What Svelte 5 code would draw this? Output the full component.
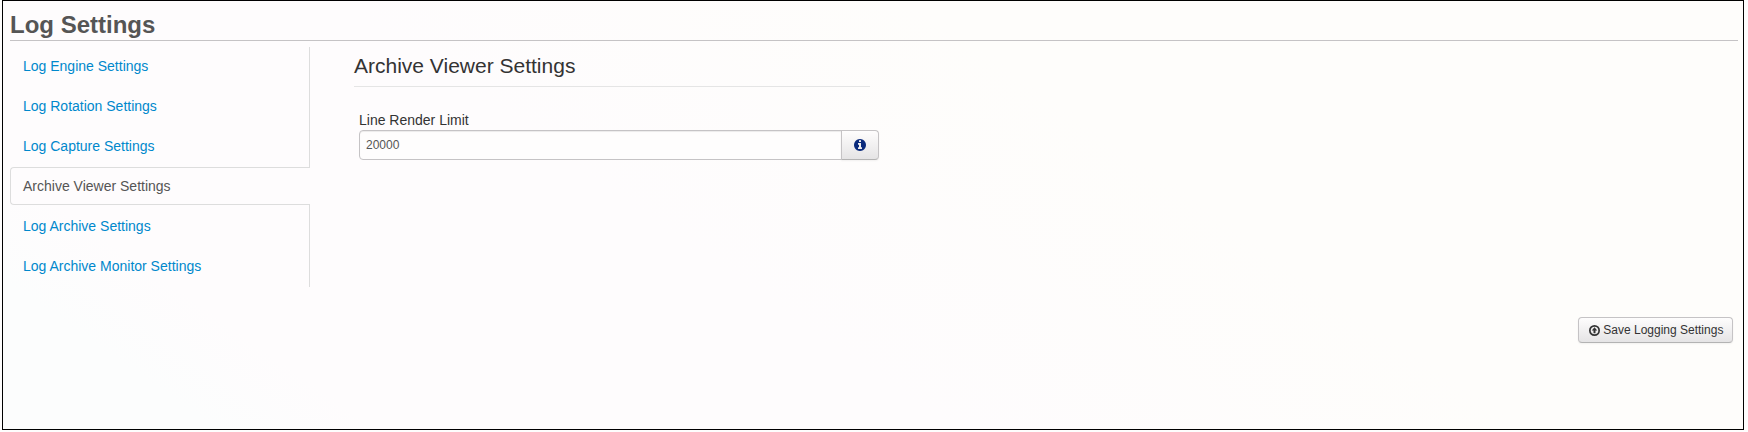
<script>
  const sections = [
    'Log Engine Settings',
    'Log Rotation Settings',
    'Log Capture Settings',
    'Archive Viewer Settings',
    'Log Archive Settings',
    'Log Archive Monitor Settings'
  ];
  let active = $state('Archive Viewer Settings');
  let limit = $state('20000');
</script>

<main class="page">
  <h1>Log Settings</h1>
  <div class="body">
    <nav>
      {#each sections as name}
        <button class="tab" class:active={name === active} onclick={() => (active = name)}>{name}</button>
      {/each}
    </nav>
    <section>
      <h2>{active}</h2>
      <div class="field">
        <label for="limit">Line Render Limit</label>
        <div class="group">
          <input id="limit" type="text" bind:value={limit} />
          <button class="info" aria-label="Info">
            <svg width="12" height="12" viewBox="0 0 1536 1536"><path fill="currentColor" d="M1024 1248v-160q0-14-9-23t-23-9h-96V544q0-14-9-23t-23-9H544q-14 0-23 9t-9 23v160q0 14 9 23t23 9h96v320h-96q-14 0-23 9t-9 23v160q0 14 9 23t23 9h448q14 0 23-9t9-23zM896 352V192q0-14-9-23t-23-9H672q-14 0-23 9t-9 23v160q0 14 9 23t23 9h192q14 0 23-9t9-23zm640 416q0 209-103 385.500T1153.500 1433 768 1536t-385.500-103T103 1153.500 0 768t103-385.500T382.500 103 768 0t385.500 103T1433 382.500 1536 768z" /></svg>
          </button>
        </div>
      </div>
    </section>
  </div>
  <footer>
    <button class="save">
      <svg width="11" height="11" viewBox="0 0 22 22"><circle cx="11" cy="11" r="9.300" fill="none" stroke="currentColor" stroke-width="3.400" /><path fill="currentColor" d="M11 4.500l5.500 6.500h-3.500V16.500H9V11H5.500z" /></svg>
      <span>Save Logging Settings</span>
    </button>
  </footer>
</main>

<style>
  :global(body) {
    margin: 0;
    background: #fefdfd;
  }
  .page, .page * {
    box-sizing: border-box;
  }
  .page {
    width: 1742px;
    height: 430px;
    margin-left: 2px;
    padding: 0 5px 0 7px;
    border: 1px solid #000;
    background: linear-gradient(35deg, #fcfdfd 0%, #fcfdfd 9%, #fefcfd 16%, #fefcfd 40%, #fefdfb 65%, #fefdfb 100%);
    font: 14px/20px "Liberation Sans", Arial, sans-serif;
    color: #333;
  }
  h1 {
    height: 40px;
    margin: 0;
    border-bottom: 1px solid #c5c3c5;
    color: #555;
    font-size: 24px;
    font-weight: bold;
    line-height: 47px;
  }
  button, input {
    margin: 0;
    font: inherit;
  }
  .body {
    display: flex;
    padding-top: 6px;
  }
  nav {
    display: flex;
    flex-direction: column;
    width: 300px;
    height: 240px;
    border-right: 1px solid #ddd;
  }
  .tab {
    height: 38px;
    margin: 0 0 2px;
    padding: 8px 12px;
    border: 1px solid transparent;
    border-radius: 4px 0 0 4px;
    background: none;
    color: #08c;
    line-height: 20px;
    text-align: left;
  }
  .tab.active {
    margin-right: -1px;
    border-color: #ddd;
    border-right: 0;
    background: #fefcfd;
    color: #555;
  }
  section {
    width: 525px;
    margin-left: 44px;
  }
  h2 {
    width: 516px;
    height: 40px;
    margin: 0;
    border-bottom: 1px solid #e5e5e5;
    font-size: 21px;
    font-weight: normal;
    line-height: 38px;
  }
  .field {
    padding: 23px 0 0 5px;
  }
  label {
    display: block;
    height: 20px;
  }
  .group {
    display: flex;
    width: 520px;
    height: 30px;
  }
  input {
    flex: 1;
    min-width: 0;
    padding: 4px 6px;
    border: 1px solid #c5c3c5;
    border-radius: 4px 0 0 4px;
    background: #fefdfd;
    box-shadow: inset 0 1px 1px rgba(0, 0, 0, 0.075);
    color: #555;
    font-size: 12px;
    outline: 0;
  }
  .info, .save {
    display: flex;
    align-items: center;
    border: 1px solid #c5c3c5;
    border-bottom-color: #b3b3b3;
    background: linear-gradient(#fefdfd, #e5e4e5);
    box-shadow: inset 0 1px 0 rgba(255, 255, 255, 0.200), 0 1px 2px rgba(0, 0, 0, 0.050);
  }
  .info {
    justify-content: center;
    width: 38px;
    margin-left: -1px;
    padding: 0;
    border-radius: 0 4px 4px 0;
    color: #0a2a7c;
  }
  footer {
    display: flex;
    justify-content: flex-end;
    padding: 30px 5px 0 0;
  }
  .save {
    gap: 3px;
    width: 155px;
    height: 26px;
    padding: 0 0 0 10.300px;
    border-radius: 4px;
    color: #333;
    font-size: 12px;
    white-space: nowrap;
  }
</style>
